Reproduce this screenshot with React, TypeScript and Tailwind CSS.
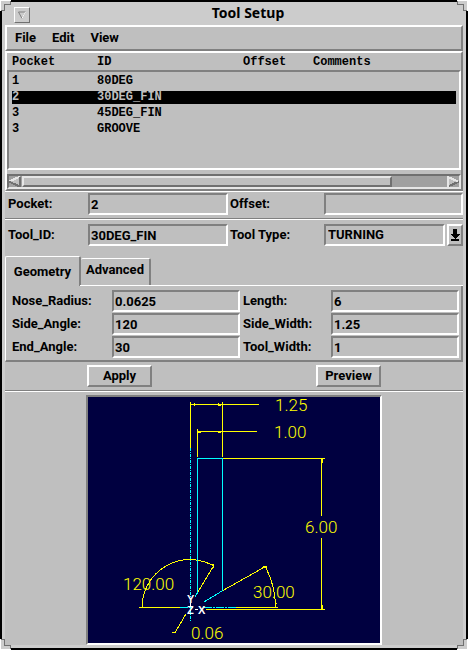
import { useState } from "react";

type ToolRow = { pocket: string; id: string; offset: string; comments: string };

const rows: ToolRow[] = [
  { pocket: "1", id: "80DEG", offset: "", comments: "" },
  { pocket: "2", id: "30DEG_FIN", offset: "", comments: "" },
  { pocket: "3", id: "45DEG_FIN", offset: "", comments: "" },
  { pocket: "3", id: "GROOVE", offset: "", comments: "" },
];

const raised = "border-2 border-t-white border-l-white border-r-[#808080] border-b-[#808080]";
const sunken = "border-2 border-t-[#808080] border-l-[#808080] border-r-white border-b-white";
const rowGrid = "grid grid-cols-[85px_146fr_70fr_143fr]";

function Field({ id, label, value, labelClass }: { id: string; label: string; value: string; labelClass?: string }) {
  return (
    <>
      <label htmlFor={id} className={`whitespace-nowrap ${labelClass ?? ""}`}>
        {label}
      </label>
      <input
        id={id}
        defaultValue={value}
        className={`h-[22px] w-full min-w-0 rounded-none bg-[#bfbfbf] px-px outline-none ${sunken}`}
      />
    </>
  );
}

function Divider() {
  return <div className="h-[2px] border-t border-b border-t-[#808080] border-b-white" />;
}

function Corner({ className }: { className: string }) {
  return (
    <svg className={`absolute size-[11px] ${className}`} viewBox="0 0 11 11" shapeRendering="crispEdges" aria-hidden="true">
      <path d="M0 0H11V5H5V11H0Z" fill="#cccccc" />
      <path d="M0.5 11V0.5H11" fill="none" stroke="#ffffff" />
      <path d="M10.5 1V4.5H4.5V10.5H1" fill="none" stroke="#707070" />
    </svg>
  );
}

function ToolList() {
  const [selected, setSelected] = useState(1);
  return (
    <section className={raised}>
      <table className="block font-['Liberation_Mono',monospace] text-xs font-bold">
        <thead className="block">
          <tr className={`h-[17px] items-center px-[5px] text-left leading-4 ${rowGrid}`}>
            <th>Pocket</th>
            <th>ID</th>
            <th>Offset</th>
            <th>Comments</th>
          </tr>
        </thead>
        <tbody className={`block h-[100px] px-[3px] pt-[2px] ${sunken}`}>
          {rows.map((row, i) => (
            <tr key={i} onClick={() => setSelected(i)} className={`h-4 items-start pt-px leading-[13px] ${rowGrid}`}>
              {[row.pocket, row.id, row.offset, row.comments].map((cell, j) => (
                <td key={j} className={`h-[13px] ${i === selected ? "bg-black text-[#bfbfbf]" : ""}`}>
                  {cell}
                </td>
              ))}
            </tr>
          ))}
        </tbody>
      </table>
      <div className="mt-1 flex h-[15px] border-2 border-t-[#707070] border-r-[#e6e6e6] border-b-[#e6e6e6] border-l-[#707070] bg-[#a0a0a0]">
        <button type="button" aria-label="Scroll left" className="w-[13px]">
          <svg viewBox="0 0 13 11" className="h-[11px] w-[13px]" shapeRendering="crispEdges">
            <path d="M0 5.5L11 0V11Z" fill="#bfbfbf" />
            <path d="M0 5.5L11 0.5" stroke="#e6e6e6" strokeWidth="2" />
            <path d="M0 5.5L10.5 10.5V1" stroke="#707070" strokeWidth="2" fill="none" />
          </svg>
        </button>
        <div className="flex-1">
          <div className="h-[11px] w-[87%] border-2 border-t-[#e6e6e6] border-l-[#e6e6e6] border-r-[#707070] border-b-[#707070] bg-[#bfbfbf]" />
        </div>
        <button type="button" aria-label="Scroll right" className="w-[12px]">
          <svg viewBox="0 0 12 11" className="h-[11px] w-[12px]" shapeRendering="crispEdges">
            <path d="M1 0L12 5.5L1 11Z" fill="#bfbfbf" />
            <path d="M1 10.5L12 5.5" stroke="#707070" strokeWidth="2" />
            <path d="M1 11V1L11 5.5" stroke="#e6e6e6" strokeWidth="2" fill="none" />
          </svg>
        </button>
      </div>
    </section>
  );
}

function ToolDrawing() {
  return (
    <svg
      viewBox="88 397 292 246"
      className="block w-full overflow-visible bg-[#000040]"
      shapeRendering="crispEdges"
      role="img"
      aria-label="Turning tool dimensions"
      fill="none"
    >
      <g stroke="#ffff00">
        <path d="M190.5 402V448M222.5 402V457M190 404.5H259M194.5 403V406M218.5 403V406M219 405.5H221" />
        <path d="M197.5 429V457M197 431.5H257M198 432.5H201M218 432.5H221" />
        <path d="M222 458.5H325M321.5 458V516M322.5 459V463M321.5 538V610M322.5 605V609" />
        <path d="M139 607.5H180M236 607.5H278M206 609.5H325" />
        <path d="M142 607.5A48 48 0 0 1 214 566M142.5 600V606M207 563L214 565.5M213 564V568" />
        <path d="M213.500 566L198 592M186 614L175 632.5H172" />
        <path d="M222 591L266.500 566L262 567.500M265.500 567A87 87 0 0 1 275.500 607M266 567L267.500 571M275.500 603V607M274.500 603H277" />
      </g>
      <g stroke="#00ffff">
        <path d="M197 458.5H223M197.5 458V593M222.500 458V591M198 592L195 597M222 591L204 602" />
        <path d="M190.5 448V621" strokeDasharray="3 1 1 1" />
        <path d="M180 607.500H193M204 607.500H236" strokeDasharray="8 1 2 1" />
      </g>
      <g stroke="#ffffff">
        <path d="M190.500 603V607M195 609.500H198" />
      </g>
      <g className="font-['Liberation_Sans',sans-serif] text-[11px]" fill="#ffffff">
        <text x="187" y="603">Y</text>
        <text x="187" y="614">Z</text>
        <text x="198" y="614">X</text>
      </g>
      <g className="font-[Roboto,sans-serif] text-[17px] font-light" fill="#ffff00">
        <text x="275" y="411">1.25</text>
        <text x="274" y="438">1.00</text>
        <text x="305" y="533">6.00</text>
        <text x="123" y="590">120.00</text>
        <text x="253" y="598">30.00</text>
        <text x="191" y="639">0.06</text>
      </g>
    </svg>
  );
}

export default function App() {
  const [tab, setTab] = useState("Geometry");
  return (
    <div className="relative flex min-h-screen flex-col border-2 border-black bg-[#cccccc] font-[Roboto,sans-serif] text-[13px] leading-4 font-bold text-black">
      <Corner className="-top-[2px] -left-[2px]" />
      <Corner className="-top-[2px] -right-[2px] rotate-90" />
      <Corner className="-bottom-[2px] -left-[2px] -rotate-90" />
      <Corner className="-right-[2px] -bottom-[2px] rotate-180" />

      <header className="flex h-[23px] items-center pb-[2px] pl-3">
        <button
          type="button"
          aria-label="Window menu"
          className="mt-1 flex size-4 items-center justify-center border border-t-white border-l-white border-r-[#707070] border-b-[#707070]"
        >
          <svg viewBox="0 0 8 8" className="size-2">
            <path d="M0.500 1H7.500L4 7.500Z" fill="#cccccc" stroke="#808080" />
            <path d="M7.500 1L4 7.500" stroke="#ffffff" />
          </svg>
        </button>
        <h1 className="flex-1 text-center font-['Noto_Sans',sans-serif] text-sm leading-4">Tool Setup</h1>
      </header>

      <main className="mx-[3px] mb-[3px] flex-1 bg-[#bfbfbf]">
        <nav className={`flex h-[26px] items-center gap-4 px-2 ${raised}`}>
          <button type="button">File</button>
          <button type="button">Edit</button>
          <button type="button">View</button>
        </nav>

        <ToolList />

        <div className="grid grid-cols-[80px_140fr_96px_139fr] items-center border-t border-white pt-px pl-[3px]">
          <Field id="pocket" label="Pocket:" value="2" />
          <Field id="offset" label="Offset:" value="" labelClass="pl-[2px]" />
        </div>
        <div className="mt-[3px]">
          <Divider />
        </div>
        <div className="mt-1 grid grid-cols-[80px_140fr_96px_139fr] items-center pl-[3px]">
          <Field id="tool-id" label="Tool_ID:" value="30DEG_FIN" />
          <label htmlFor="tool-type" className="pl-[2px] whitespace-nowrap">
            Tool Type:
          </label>
          <div className="flex gap-[2px]">
            <select
              id="tool-type"
              defaultValue="TURNING"
              className={`h-[22px] min-w-0 flex-1 appearance-none rounded-none bg-[#bfbfbf] px-[2px] outline-none ${sunken}`}
            >
              <option>TURNING</option>
            </select>
            <button type="button" aria-label="Show tool types" className={`flex h-[22px] w-4 items-center justify-center ${raised}`}>
              <svg viewBox="0 0 10 12" className="h-3 w-[10px] shrink-0" shapeRendering="crispEdges">
                <path d="M3 0H7V5H10L5 10L0 5H3ZM1 10H9V12H1Z" fill="#000000" />
              </svg>
            </button>
          </div>
        </div>

        <div role="tablist" className="mt-[10px] flex items-end">
          <button
            type="button"
            role="tab"
            aria-selected={tab === "Geometry"}
            onClick={() => setTab("Geometry")}
            className="-mb-px h-[30px] w-[76px] rounded-t-[2px] border-t border-r-2 border-l border-t-white border-r-[#808080] border-l-white bg-[#bfbfbf]"
          >
            Geometry
          </button>
          <button
            type="button"
            role="tab"
            aria-selected={tab === "Advanced"}
            onClick={() => setTab("Advanced")}
            className="h-[27px] w-[70px] rounded-t-[2px] border-t border-r-2 border-t-white border-r-[#808080] pb-1"
          >
            Advanced
          </button>
        </div>
        <div className="flex">
          <div className="w-[75px] border-l border-white" />
          <div className="h-px flex-1 bg-white" />
        </div>
        <section className="grid grid-cols-[100px_1fr_91px_1fr] items-center gap-y-px border-r-2 border-b-2 border-l border-r-[#808080] border-b-[#808080] border-l-white pt-1 pr-[2px] pb-[2px] pl-[6px]">
          <Field id="nose-radius" label="Nose_Radius:" value="0.0625" />
          <Field id="length" label="Length:" value="6" labelClass="pl-[3px]" />
          <Field id="side-angle" label="Side_Angle:" value="120" />
          <Field id="side-width" label="Side_Width:" value="1.25" labelClass="pl-[3px]" />
          <Field id="end-angle" label="End_Angle:" value="30" />
          <Field id="tool-width" label="Tool_Width:" value="1" labelClass="pl-[3px]" />
        </section>

        <div className="mx-auto my-[3px] flex max-w-[296px] justify-between px-px">
          <button type="button" className={`h-[22px] w-[65px] ${raised}`}>
            Apply
          </button>
          <button type="button" className={`h-[22px] w-[65px] ${raised}`}>
            Preview
          </button>
        </div>
        <Divider />
        <div className={`mx-auto mt-[3px] max-w-[296px] ${sunken}`}>
          <ToolDrawing />
        </div>
      </main>
    </div>
  );
}
